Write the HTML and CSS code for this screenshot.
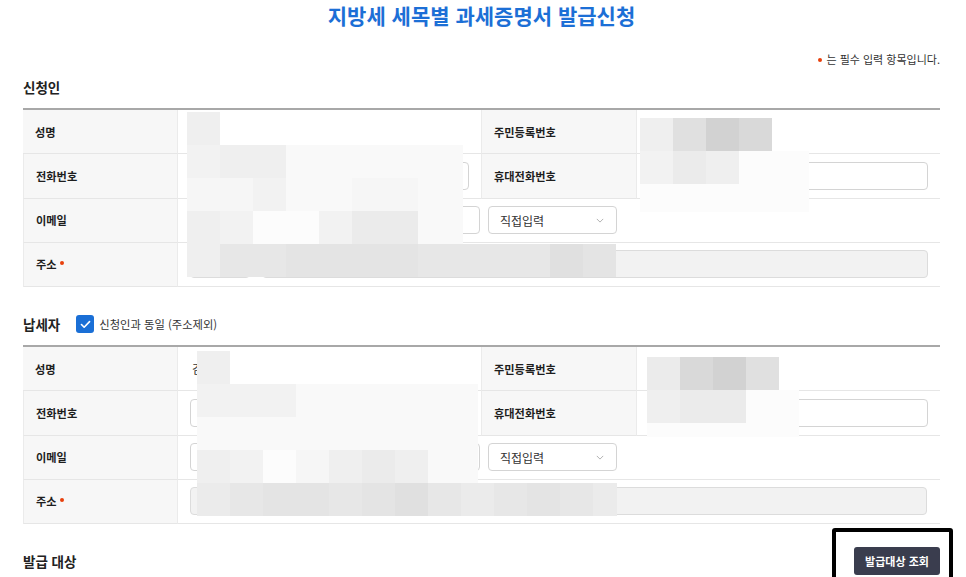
FILE: index.html
```html
<!DOCTYPE html>
<html lang="ko">
<head>
<meta charset="utf-8">
<title>지방세 세목별 과세증명서 발급신청</title>
<link rel="stylesheet" href="styles.css">
</head>
<body>
<div class="page">
  <h1 class="title">지방세 세목별 과세증명서 발급신청</h1>
  <p class="note"><span class="req"></span>는 필수 입력 항목입니다.</p>

  <h2 class="sec-head">신청인</h2>
  <div class="table-wrap">
    <div class="form-grid">
      <div class="th">성명</div>
      <div class="td"><span class="val">김</span></div>
      <div class="th">주민등록번호</div>
      <div class="td"><span class="val">******-*******</span></div>

      <div class="th">전화번호</div>
      <div class="td"><input class="inp phone" type="text"></div>
      <div class="th">휴대전화번호</div>
      <div class="td"><input class="inp mobile" type="text"></div>

      <div class="th">이메일</div>
      <div class="td span3">
        <input class="inp mail-id" type="text"><span class="at">@</span><input class="inp mail-domain" type="text">
        <div class="select"><span>직접입력</span><svg class="chev" viewBox="0 0 10 6" width="8" height="5"><path d="M1 1l4 4 4-4" fill="none" stroke="#b0b0b0" stroke-width="1.2"/></svg></div>
      </div>

      <div class="th">주소<span class="req"></span></div>
      <div class="td span3">
        <input class="inp zip" type="text" disabled><input class="inp addr" type="text" disabled>
      </div>
    </div>

    <div class="mosaic t1-left">
      <div class="mrow"><i class="g4"></i></div>
      <div class="mrow"><i class="g3"></i><i class="g4"></i><i class="g4"></i><i class="g1"></i><i class="g1"></i><i class="g1"></i><i class="g1"></i><i class="g1"></i><i class="g1 part12"></i></div>
      <div class="mrow"><i class="g2"></i><i class="g2"></i><i class="g3"></i><i class="g1"></i><i class="g1"></i><i class="g2"></i><i class="g2"></i><i class="g1"></i><i class="g1 part12"></i></div>
      <div class="mrow"><i class="g4"></i><i class="g3"></i><i class="g0"></i><i class="g0"></i><i class="g3"></i><i class="g5"></i><i class="g5"></i><i class="g1"></i><i class="g1 part12"></i></div>
      <div class="mrow"><i class="g4"></i><i class="g6"></i><i class="g6"></i><i class="g7"></i><i class="g7"></i><i class="g7"></i><i class="g7"></i><i class="g6"></i><i class="g6"></i><i class="g6"></i><i class="g6"></i><i class="g8"></i><i class="g7"></i></div>
    </div>
    <div class="mosaic t1-right">
      <div class="mrow"><i class="g4"></i><i class="g8"></i><i class="g10"></i><i class="g9"></i></div>
      <div class="mrow"><i class="g3"></i><i class="g5"></i><i class="g4"></i><i class="g0"></i><i class="g0"></i><i class="g0 part4"></i></div>
      <div class="mrow short"><i class="g0"></i><i class="g0"></i><i class="g0"></i><i class="g0"></i><i class="g0"></i><i class="g0 part4"></i></div>
    </div>
  </div>

  <div class="sec-head row-head">
    <h2 class="sec-title">납세자</h2>
    <label class="check">
      <span class="box"><svg viewBox="0 0 12 10" width="11" height="9"><path d="M1.5 5l3 3 6-6.2" fill="none" stroke="#fff" stroke-width="1.8" stroke-linecap="round" stroke-linejoin="round"/></svg></span>
      <span class="check-label">신청인과 동일 (주소제외)</span>
    </label>
  </div>
  <div class="table-wrap">
    <div class="form-grid">
      <div class="th">성명</div>
      <div class="td"><span class="val">김</span></div>
      <div class="th">주민등록번호</div>
      <div class="td"><span class="val">******-*******</span></div>

      <div class="th">전화번호</div>
      <div class="td"><input class="inp phone" type="text"></div>
      <div class="th">휴대전화번호</div>
      <div class="td"><input class="inp mobile" type="text"></div>

      <div class="th">이메일</div>
      <div class="td span3">
        <input class="inp mail-id" type="text"><span class="at">@</span><input class="inp mail-domain" type="text">
        <div class="select"><span>직접입력</span><svg class="chev" viewBox="0 0 10 6" width="8" height="5"><path d="M1 1l4 4 4-4" fill="none" stroke="#b0b0b0" stroke-width="1.2"/></svg></div>
      </div>

      <div class="th">주소<span class="req"></span></div>
      <div class="td span3">
        <input class="inp addr-full" type="text" disabled>
      </div>
    </div>

    <div class="mosaic t2-left">
      <div class="mrow"><i class="g4"></i></div>
      <div class="mrow"><i class="g3"></i><i class="g3"></i><i class="g3"></i><i class="g1"></i><i class="g1"></i><i class="g1"></i><i class="g1"></i><i class="g1"></i><i class="g1 part17"></i></div>
      <div class="mrow"><i class="g1"></i><i class="g1"></i><i class="g1"></i><i class="g1"></i><i class="g1"></i><i class="g1"></i><i class="g1"></i><i class="g1"></i><i class="g1 part17"></i></div>
      <div class="mrow"><i class="g4"></i><i class="g3"></i><i class="g0"></i><i class="g2"></i><i class="g4"></i><i class="g5"></i><i class="g4"></i><i class="g1"></i><i class="g1 part17"></i></div>
      <div class="mrow"><i class="g5"></i><i class="g6"></i><i class="g7"></i><i class="g7"></i><i class="g6"></i><i class="g7"></i><i class="g8"></i><i class="g6"></i><i class="g5"></i><i class="g6"></i><i class="g7"></i><i class="g6"></i><i class="g5 part24"></i></div>
    </div>
    <div class="mosaic t2-right">
      <div class="mrow"><i class="g5"></i><i class="g9"></i><i class="g10"></i><i class="g8"></i></div>
      <div class="mrow"><i class="g4"></i><i class="g5"></i><i class="g5"></i><i class="g0"></i><i class="g0 part20"></i></div>
      <div class="mrow tiny"><i class="g0"></i><i class="g0"></i><i class="g0"></i><i class="g0"></i><i class="g0 part20"></i></div>
    </div>
  </div>

  <div class="sec-head row-head issue">
    <h2 class="sec-title">발급 대상</h2>
    <div class="btn-wrap">
      <button class="btn-dark" type="button">발급대상 조회</button>
      <span class="highlight"></span>
    </div>
  </div>
</div>
</body>
</html>
```

FILE: styles.css
```css
html { overflow: hidden; }
* { box-sizing: border-box; }
body {
  margin: 0;
  background: #fff;
  color: #222;
  font-family: "Noto Sans CJK KR", "Noto Sans", sans-serif;
}
.page {
  width: 966px;
  padding: 0 26px 0 23px;
}
.title {
  margin: 0;
  height: 30px;
  line-height: 30px;
  font-size: 21px;
  font-weight: 700;
  color: #1c6fd6;
  text-align: center;
  letter-spacing: 0;
}
.note {
  margin: 22px 0 0;
  height: 14px;
  line-height: 14px;
  font-size: 11px;
  color: #333;
  text-align: right;
}
.req {
  display: inline-block;
  width: 4px;
  height: 4px;
  border-radius: 50%;
  background: #e8400c;
  margin: 0 4px 0 3px;
  vertical-align: middle;
  position: relative;
  top: -1px;
}
.sec-head {
  margin: 11px 0 11px;
  height: 20px;
  line-height: 20px;
  font-size: 13.5px;
  font-weight: 700;
  color: #222;
}
.row-head {
  display: flex;
  align-items: center;
  gap: 0;
  margin: 27px 0 11px;
}
.sec-title {
  margin: 0;
  font-size: 13.5px;
  font-weight: 700;
  line-height: 20px;
}
.check {
  display: flex;
  align-items: center;
  margin-left: 16px;
}
.box {
  width: 18px;
  height: 18px;
  border-radius: 3px;
  background: #1a6fd6;
  display: flex;
  align-items: center;
  justify-content: center;
}
.check-label {
  margin-left: 5px;
  font-size: 11.3px;
  font-weight: 400;
  color: #333;
}
.table-wrap {
  position: relative;
}
.form-grid {
  display: grid;
  grid-template-columns: 155px 303px 156px 303px;
  grid-auto-rows: 44.25px;
  border-top: 2px solid #a8a8a8;
}
.th {
  background: #f7f7f7;
  border-bottom: 1px solid #e6e6e6;
  border-right: 1px solid #ebebeb;
  padding-left: 12px;
  display: flex;
  align-items: center;
  font-size: 11.2px;
  font-weight: 700;
  color: #1e1e1e;
}
.td {
  border-bottom: 1px solid #e6e6e6;
  padding: 0 12px;
  display: flex;
  align-items: center;
  font-size: 12px;
  color: #333;
}
.span3 { grid-column: span 3; }
.th + .td + .th { border-left: 1px solid #ebebeb; }
.val { padding-left: 2px; }
.inp {
  height: 28px;
  border: 1px solid #d4d4d4;
  border-radius: 4px;
  background: #fff;
  font: inherit;
  padding: 0 8px;
  margin: 0;
  outline: none;
}
.inp:disabled { background: #f2f2f2; border-color: #dcdcdc; }
.phone { width: 279px; }
.mobile { width: 279px; }
.mail-id { width: 128px; }
.at { width: 24px; text-align: center; color: #555; }
.mail-domain { width: 138px; }
.select {
  margin-left: 8px;
  width: 129px;
  height: 28px;
  border: 1px solid #d4d4d4;
  border-radius: 4px;
  display: flex;
  align-items: center;
  justify-content: space-between;
  padding: 0 12px 0 11px;
  font-size: 12px;
  color: #333;
}
.zip { width: 60px; border-color: #bdbdbd; }
.addr { margin-left: 12px; width: 666px; }
.addr-full { width: 737px; border-left-color: #9a9a9a; }

.mosaic {
  position: absolute;
  display: flex;
  flex-direction: column;
  pointer-events: none;
}
.mrow { display: flex; height: 33px; }
.mrow.short { height: 28px; }
.mrow.tiny { height: 14px; }
.mrow i { display: block; width: 33px; height: 100%; flex: none; }
.mrow i.part4 { width: 4px; }
.mrow i.part12 { width: 12px; }
.mrow i.part17 { width: 17px; }
.mrow i.part20 { width: 20px; }
.mrow i.part24 { width: 24px; }
.g0 { background: #fcfcfc; }
.g1 { background: #f9f9f9; }
.g2 { background: #f6f6f6; }
.g3 { background: #f2f2f2; }
.g4 { background: #efefef; }
.g5 { background: #ebebeb; }
.g6 { background: #e7e7e7; }
.g7 { background: #e4e4e4; }
.g8 { background: #e0e0e0; }
.g9 { background: #d9d9d9; }
.g10 { background: #d2d2d2; }
.t1-left { left: 164px; top: 4px; }
.t1-right { left: 617px; top: 10px; }
.t2-left { left: 174px; top: 6px; }
.t2-right { left: 624px; top: 12px; }

.issue {
  justify-content: space-between;
  margin-top: 23px;
  height: 28px;
}
.btn-wrap { position: relative; }
.btn-dark {
  display: block;
  width: 86px;
  height: 28px;
  border: 0;
  border-radius: 3px;
  background: #3a3d4e;
  color: #fff;
  font-family: inherit;
  font-size: 11px;
  font-weight: 700;
  padding: 0;
}
.highlight {
  position: absolute;
  left: -22px;
  top: -19px;
  width: 121px;
  height: 64px;
  border: 4px solid #000;
  border-radius: 3px;
}
```
